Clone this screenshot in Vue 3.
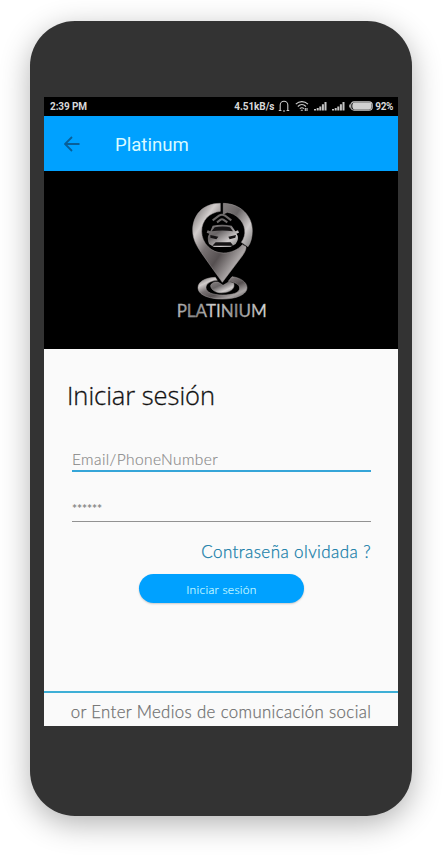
<script setup>
const title = 'Platinum'
const bars = [0, 1]
</script>

<template>
  <main class="page">
    <section class="phone">
      <div class="screen">
        <header class="status">
          <span class="time">2:39 PM</span>
          <span class="speed">4.51kB/s</span>
          <svg class="bell" viewBox="0 0 12 12"><path d="M.8 10.5H3.4M8.6 10.5h2.6M2.2 10V5a3.8 3.8 0 0 1 7.6 0V10M5 11h2" /></svg>
          <svg class="wifi" viewBox="0 0 14 12"><path d="M.8 4.2C4.4.7 9.4.7 13 4.2M2.8 6.5c2.5-2.4 5.7-2.4 8.2 0M4.8 8.6c1.4-1.2 2.8-1.2 4.2 0" /><path d="M5.8 10.2h2M10.3 8v3M12 8v3" /></svg>
          <svg v-for="b in bars" :key="b" class="signal" viewBox="0 0 13 10"><path d="M0 8h2v1.5H0zM2.7 7h2v2.5h-2zM5.3 5.4h2v4.1h-2zM7.9 3.3h2v6.2h-2zM10.5 1h2v8.5h-2z" /></svg>
          <svg class="battery" viewBox="0 0 24 10"><rect x="1.8" y=".9" width="21.4" height="8.2" rx="3.2" /><rect class="charge" x="3.3" y="1.6" width="19.2" height="6.8" rx="2.4" /><path d="M1.2 3.5Q.3 5 1.2 6.5" /></svg>
          <span class="percent">92%</span>
        </header>
        <nav class="appbar">
          <svg class="back" viewBox="0 0 16 16"><path d="M15.5 8H1.2M8 1L1 8l7 7" /></svg>
          <h1>{{ title }}</h1>
        </nav>
        <div class="banner">
          <svg class="logo" viewBox="0 0 345 420">
            <defs>
              <linearGradient id="metal" x1="0" y1="0" x2="1" y2="1">
                <stop offset="0" stop-color="#5c5858" />
                <stop offset=".22" stop-color="#d2cdcc" />
                <stop offset=".4" stop-color="#777172" />
                <stop offset=".58" stop-color="#565051" />
                <stop offset=".78" stop-color="#aaa5a5" />
                <stop offset="1" stop-color="#4c4849" />
              </linearGradient>
              <linearGradient id="shine" x1="0" y1="0" x2="1" y2="1">
                <stop offset="0" stop-color="#858080" />
                <stop offset=".35" stop-color="#686465" />
                <stop offset=".7" stop-color="#d0cccc" />
                <stop offset="1" stop-color="#777" />
              </linearGradient>
              <linearGradient id="letters" x1="0" y1="0" x2="1" y2="0">
                <stop offset="0" stop-color="#bbb" />
                <stop offset=".2" stop-color="#777" />
                <stop offset=".42" stop-color="#ddd" />
                <stop offset=".65" stop-color="#888" />
                <stop offset="1" stop-color="#ddd" />
              </linearGradient>
            </defs>
            <g class="metal-edge">
              <path fill="url(#metal)" d="M166 40C111 40 83 78 83 121C83 151 98 171 108 187L172 277L227 204C238 190 244 179 243 170L232 164C219 179 198 189 175 189C139 189 110 160 110 124C110 91 133 68 166 64Z" />
              <path fill="url(#shine)" d="M175 40C226 41 262 77 262 122C262 142 257 159 249 170L229 157C237 145 241 133 239 119C236 92 211 70 187 67L175 72Z" />
              <path fill="url(#metal)" d="M151 262C119 263 99 276 99 293C99 314 131 327 171 327C218 327 246 312 246 293C246 276 225 263 201 260L190 274C210 276 224 284 224 294C224 309 201 315 173 315C143 315 123 307 123 293C123 280 137 273 157 271Z" />
              <path fill="url(#shine)" d="M150 276Q133 282 138 292C145 307 165 312 187 306C202 302 210 292 206 280L191 276L174 286L159 276Z" />
            </g>
            <path class="wifi-mark" d="M143 91L162 77Q171 71 180 77L199 91M156 97L167 89Q171 86 175 89L187 97" />
            <path fill="url(#shine)" d="M143 107Q171 102 200 107L211 124L219 121L222 128L214 131Q222 139 217 153L212 162L196 171H147L132 162Q124 143 133 131L125 128L128 121L136 124Z" />
            <path class="car-dark" d="M149 112Q173 107 195 112L204 124Q171 119 140 124ZM136 135L160 140L154 148L136 143ZM213 135L190 140L194 148L211 143ZM152 157H197L205 167H142Z" />
            <text x="35" y="380" textLength="270" lengthAdjust="spacingAndGlyphs">PLATINIUM</text>
          </svg>
        </div>
        <form class="login" @submit.prevent>
          <h2>Iniciar sesión</h2>
          <div class="field email"><span>Email/PhoneNumber</span></div>
          <div class="field password"><span>******</span></div>
          <a class="forgot">Contraseña olvidada ?</a>
          <button>Iniciar sesión</button>
        </form>
        <footer><span>or Enter Medios de comunicación social</span></footer>
      </div>
    </section>
  </main>
</template>

<style>
body { background: #fff; }
</style>

<style scoped>
* { box-sizing: border-box; }
.page { height: 856px; padding: 21px 31px 0 30px; overflow: hidden; font-family: Lato, sans-serif; background: #fff; }
.phone { width: 382px; height: 795px; padding: 75.5px 14px 0; border-radius: 45px; background: #333; box-shadow: 0 8px 30px rgba(0,0,0,.3); }
.screen { width: 354px; height: 629px; display: flex; flex-direction: column; background: #fafafa; overflow: hidden; }
.status { height: 19.5px; flex: none; display: flex; align-items: center; padding: 0 5px 0 6px; background: #000; color: #d8d8d8; font: 700 10px Roboto, sans-serif; white-space: nowrap; }
.time { letter-spacing: -.1px; }
.speed { margin-left: auto; letter-spacing: -.08px; }
.status svg { flex: none; fill: none; stroke: #ccc; stroke-width: 1.1; }
.bell { width: 12px; height: 12px; margin-left: 4px; }
.wifi { width: 14px; height: 12px; margin-left: 5px; }
.status .signal { width: 13px; height: 10px; margin-left: 5px; fill: #c4c4c4; stroke: none; }
.battery { width: 24px; height: 10px; margin-left: 4px; }
.status .battery .charge { fill: #d0d0d0; stroke: none; }
.percent { margin-left: 2px; font-size: 10px; letter-spacing: -.4px; }
.appbar { height: 55px; flex: none; display: flex; align-items: center; padding: 1px 0 0 20px; background: #00a1ff; }
.back { width: 16px; height: 16px; fill: none; stroke: #095f98; stroke-width: 1.8; }
h1 { margin: 1px 0 0 35px; color: #d9faff; font: 400 18.6px Roboto, sans-serif; }
.banner { height: 177.5px; flex: none; padding: 19px 0 0 121px; background: #000; }
.logo { display: block; width: 115px; height: 140px; }
.metal-edge path { stroke: #aaa5a5; stroke-width: 1.5; }
.wifi-mark { fill: none; stroke: #6d6969; stroke-width: 6; }
.car-dark { fill: #151314; }
.logo text { fill: url(#letters); stroke: #aaa; stroke-width: .8; font: 400 51px Lato, sans-serif; }
.login { height: 342.5px; flex: none; display: flex; flex-direction: column; padding: 28px 27px 0 28px; }
h2 { margin: 0 0 0 -5px; height: 36px; line-height: 36px; color: #111; font-family: "Open Sans", sans-serif; font-size: 25.5px; font-weight: 300; white-space: nowrap; -webkit-text-stroke: .3px #111; letter-spacing: -.05px; }
.field { color: #888; display: flex; align-items: flex-end; font-size: 15.5px; font-weight: 300; line-height: 20px; }
.email { height: 59.5px; padding-bottom: 1px; border-bottom: 2px solid #35a5d8; letter-spacing: .4px; -webkit-text-stroke: .15px #888; }
.password { height: 50px; border-bottom: 1px solid #929292; font-size: 12px; font-weight: 700; padding-bottom: 2px; letter-spacing: -.1px; }
.forgot { align-self: flex-end; margin-top: 19px; height: 22px; line-height: 22px; color: #147ca8; font-size: 17px; font-weight: 300; letter-spacing: .42px; white-space: nowrap; -webkit-text-stroke: .25px #147ca8; }
button { flex: none; width: 165px; height: 29px; margin: 11px 0 0 67px; padding: 2px 0 0; border: 0; border-radius: 15px; background: #00a1ff; color: #c9f7ff; font: 300 12px Lato, sans-serif; letter-spacing: .32px; -webkit-text-stroke: .2px #c9f7ff; box-shadow: 0 1px 2px #0003; }
footer { height: 34.5px; flex: none; display: flex; justify-content: center; padding: 8px 0 0; border-top: 2px solid #3eafd6; color: #707070; font-size: 16.8px; font-weight: 300; letter-spacing: .37px; line-height: 22px; white-space: nowrap; -webkit-text-stroke: .25px #707070; }
</style>
